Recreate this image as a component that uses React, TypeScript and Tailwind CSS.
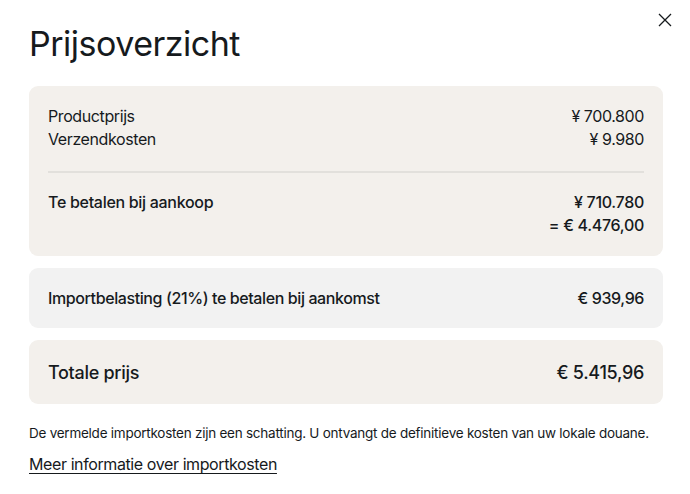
import React from "react";

export default function App() {
  const font = { fontFamily: "Inter, 'Noto Sans', sans-serif" };
  return (
    <div className="w-[690px] h-[494px] bg-white text-[#161a1d] relative" style={font}>
      <button className="absolute right-[17px] top-[12px] w-[16px] h-[16px] text-[#161a1d]" aria-label="close">
        <svg viewBox="0 0 16 16" width="16" height="16" fill="none" stroke="currentColor" strokeWidth="1.3">
          <path d="M2 2 L14 14 M14 2 L2 14" />
        </svg>
      </button>
      <div className="px-[29px] pt-[22px] pr-[27px]">
        <h1 className="text-[34px] leading-[44px] font-normal tracking-[-0.5px]">Prijsoverzicht</h1>
        <div className="mt-[20px] flex flex-col gap-[12px]">
          <div className="bg-[#f3f0ec] rounded-[9px] px-[19px] pt-[19px] pb-[19px]">
            <div className="flex justify-between text-[16px] leading-[23px] tracking-[-0.4px]">
              <div className="flex flex-col">
                <span>Productprijs</span>
                <span>Verzendkosten</span>
              </div>
              <div className="flex flex-col items-end">
                <span>¥ 700.800</span>
                <span>¥ 9.980</span>
              </div>
            </div>
            <div className="h-[2px] bg-[#e2e0dc] mt-[20px] mb-[18px]" />
            <div className="flex justify-between text-[16px] leading-[23px] font-medium tracking-[-0.3px]">
              <span>Te betalen bij aankoop</span>
              <div className="flex flex-col items-end">
                <span>¥ 710.780</span>
                <span>= € 4.476,00</span>
              </div>
            </div>
          </div>
          <div className="bg-[#f2f2f2] rounded-[9px] px-[19px] h-[60px] flex items-center justify-between text-[16px] font-medium tracking-[-0.4px]">
            <span>Importbelasting (21%) te betalen bij aankomst</span>
            <span>€ 939,96</span>
          </div>
          <div className="bg-[#f3f0ec] rounded-[9px] px-[19px] h-[64px] flex items-center justify-between text-[18px] font-medium tracking-[-0.3px]">
            <span>Totale prijs</span>
            <span>€ 5.415,96</span>
          </div>
        </div>
        <p className="mt-[19px] text-[13.5px] leading-[20px] tracking-[-0.25px] whitespace-nowrap">
          De vermelde importkosten zijn een schatting. U ontvangt de definitieve kosten van uw lokale douane.
        </p>
        <a href="#" className="inline-block mt-[10px] text-[16px] leading-[22px] tracking-[-0.4px] underline underline-offset-[3px]">
          Meer informatie over importkosten
        </a>
      </div>
    </div>
  );
}
